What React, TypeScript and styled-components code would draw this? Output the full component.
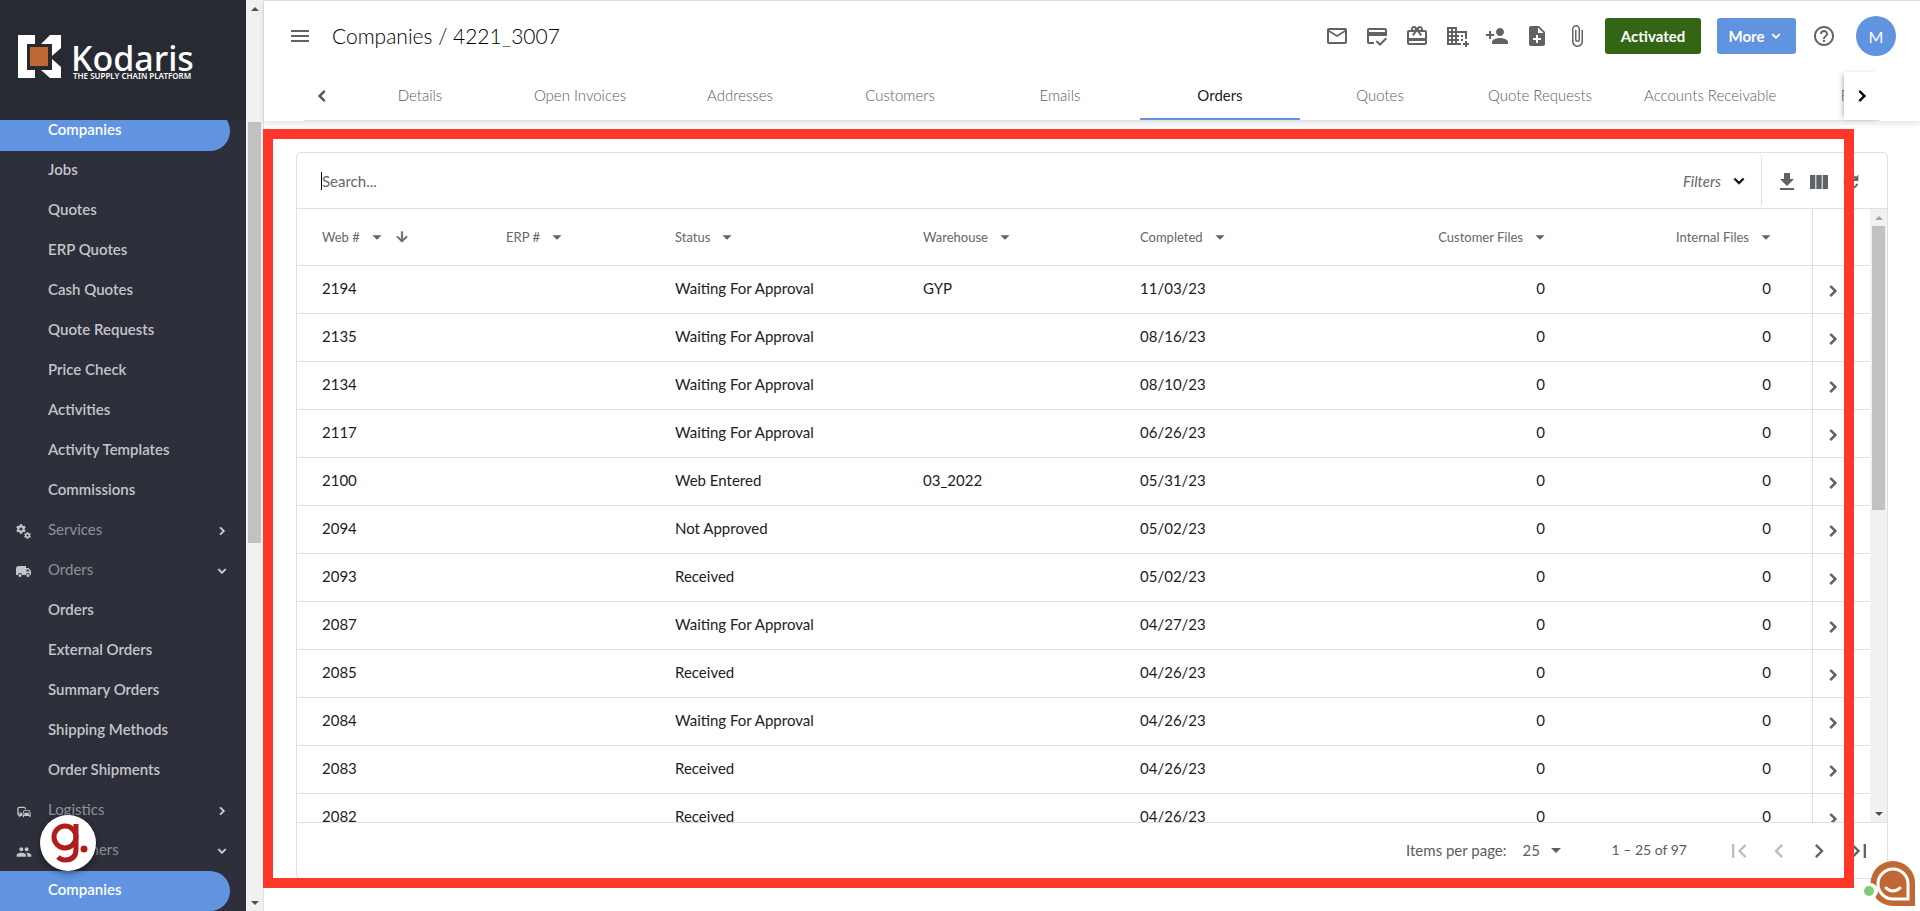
import React from "react";
import styled, { createGlobalStyle, css } from "styled-components";
import {
  MdOutlineMail, MdOutlineCreditScore, MdRedeem, MdDomainAdd, MdPersonAdd, MdNoteAdd, MdAttachFile,
  MdHelpOutline, MdMenu, MdChevronLeft, MdChevronRight, MdKeyboardArrowDown, MdFileDownload, MdViewColumn,
  MdRefresh, MdArrowDropDown, MdArrowDownward, MdFirstPage, MdLastPage, MdPeople, MdOutlineCommute,
} from "react-icons/md";
import { FaCog } from "react-icons/fa";

const Global = createGlobalStyle`
  *, *::before, *::after { box-sizing: border-box; }
  body { margin: 0; font-family: Lato, "Open Sans", sans-serif; font-size: 15px; color: #1c1c26; background: #fff; }
  button, input, select { font: inherit; color: inherit; }
  button { border: 0; padding: 0; background: none; cursor: pointer; }
`;

const LINE = "#e0e0e0";
const BLUE = "#6094e0";
const GREY = "#5f6368";

const heavy = css`
  path:not([fill="none"]) { stroke: currentColor; stroke-width: 1; }
`;
const HeavyLeft = styled(MdChevronLeft)`${heavy}`;
const HeavyRight = styled(MdChevronRight)`${heavy}`;
const HeavyDown = styled(MdKeyboardArrowDown)`${heavy}`;
const HeavySort = styled(MdArrowDownward)`${heavy}`;

const Shell = styled.div`
  display: flex;
  height: 100vh;
  overflow: hidden;
  position: relative;
`;

const Sidebar = styled.aside`
  width: 246px;
  flex: none;
  display: flex;
  flex-direction: column;
  background: #2d2f3b;
`;

const Brand = styled.a`
  height: 120px;
  flex: none;
  display: flex;
  align-items: flex-start;
  gap: 9px;
  padding: 35px 18px 0;
  background: #272a33;
  color: #fff;
  text-decoration: none;
`;

const BrandText = styled.span`
  display: flex;
  flex-direction: column;
  padding-top: 9px;
  font-family: "Noto Sans", "Open Sans", sans-serif;
`;

const BrandName = styled.span`
  font-size: 34px;
  font-weight: 500;
  line-height: 28px;
`;

const BrandTag = styled.span`
  padding-left: 2px;
  font-size: 8px;
  font-weight: 600;
  line-height: 8px;
  white-space: nowrap;
`;

const NavClip = styled.nav`
  flex: 1;
  min-height: 0;
  overflow: hidden;
`;

const NavList = styled.ul`
  list-style: none;
  margin: -9px 0 0;
  padding: 0;
`;

const NavLink = styled.a<{ $kind: "item" | "group" | "active" }>`
  height: 40px;
  width: 230px;
  display: flex;
  align-items: center;
  padding: 0 0 4px 16px;
  text-decoration: none;
  color: #c4c5c9;
  font-weight: 600;
  ${(p) => p.$kind === "group" && css`color: #8f9096; font-weight: 400;`}
  ${(p) => p.$kind === "active" && css`color: #fff; background: ${BLUE}; border-radius: 0 20px 20px 0;`}
`;

const NavIcon = styled.span`
  width: 32px;
  display: flex;
  color: #c4c5c9;
  padding-top: 5px;
`;

const NavArrow = styled.span`
  margin-left: auto;
  display: flex;
  color: #d0d0d4;
  padding-top: 4px;
`;

const Track = styled.div`
  width: 17px;
  flex: none;
  display: flex;
  flex-direction: column;
  align-items: center;
  background: #f1f1f1;
`;

const TrackArrow = styled.span<{ $down?: boolean; $dim?: boolean }>`
  height: 17px;
  display: flex;
  align-items: center;
  &::before {
    content: "";
    border: 4px solid transparent;
    border-top-width: ${(p) => (p.$down ? "4px" : "0")};
    border-bottom-width: ${(p) => (p.$down ? "0" : "4px")};
    border-${(p) => (p.$down ? "top" : "bottom")}-color: ${(p) => (p.$dim ? "#a3a3a3" : "#505050")};
  }
`;

const TrackRun = styled.div`
  flex: 1;
  width: 13px;
  display: flex;
  flex-direction: column;
`;

const Thumb = styled.div<{ $before: number; $size: number }>`
  margin-top: auto;
  flex: none;
  height: ${(p) => p.$size}%;
  background: #c1c1c1;
  & + div { height: ${(p) => 100 - p.$before - p.$size}%; }
`;

const Main = styled.main`
  flex: 1;
  min-width: 0;
  display: flex;
  flex-direction: column;
  border-left: 1px solid ${LINE};
  border-top: 1px solid ${LINE};
`;

const Header = styled.header`
  flex: none;
  box-shadow: 0 3px 6px rgba(0, 0, 0, 0.1);
`;

const TitleBar = styled.div`
  height: 71px;
  display: flex;
  align-items: center;
  padding: 0 24px 1px;
`;

const Title = styled.h1`
  margin: 0 auto 0 20px;
  font-size: 21px;
  font-weight: 300;
  line-height: 28px;
  color: #000;
`;

const IconButton = styled.button<{ $w?: number; $color?: string }>`
  width: ${(p) => p.$w ?? 40}px;
  height: 32px;
  flex: none;
  display: flex;
  align-items: center;
  justify-content: center;
  color: ${(p) => p.$color ?? GREY};
`;

const HeaderIcons = styled.div`
  display: flex;
  margin-right: 8px;
`;

const Action = styled.button<{ $bg: string; $w: number }>`
  width: ${(p) => p.$w}px;
  height: 36px;
  margin-right: 16px;
  display: flex;
  align-items: center;
  justify-content: center;
  gap: 4px;
  border-radius: 3px;
  background: ${(p) => p.$bg};
  color: #fff;
  font-weight: 700;
`;

const Avatar = styled.button`
  width: 40px;
  height: 40px;
  margin-left: 20px;
  border-radius: 50%;
  background: ${BLUE};
  color: #fff;
  font-size: 16px;
`;

const TabBar = styled.div`
  height: 49px;
  margin: 0 40px;
  display: flex;
  border-bottom: 1px solid ${LINE};
`;

const TabPager = styled.button<{ $next?: boolean }>`
  width: 36px;
  flex: none;
  display: flex;
  align-items: center;
  justify-content: center;
  color: ${(p) => (p.$next ? "#111" : "#5a5a5f")};
`;

const Tabs = styled.div`
  flex: 1;
  min-width: 0;
  display: flex;
  overflow: hidden;
`;

const Tab = styled.button<{ $on: boolean }>`
  min-width: 160px;
  padding: 0 24px;
  flex: none;
  white-space: nowrap;
  font-weight: ${(p) => (p.$on ? 400 : 300)};
  color: ${(p) => (p.$on ? "#222" : "#5c5c62")};
  border-bottom: 2px solid ${(p) => (p.$on ? BLUE : "transparent")};
`;

const TabEdge = styled.div`
  display: flex;
  position: relative;
  background: #fff;
  box-shadow: -3px 0 5px -2px rgba(0, 0, 0, 0.3);
`;

const Card = styled.section`
  flex: 1;
  min-height: 0;
  margin: 31px 32px 32px;
  display: flex;
  flex-direction: column;
  border: 1px solid ${LINE};
  border-radius: 5px;
`;

const SearchRow = styled.div`
  height: 56px;
  flex: none;
  display: flex;
  border-bottom: 1px solid ${LINE};
`;

const SearchBox = styled.div`
  flex: 1;
  display: flex;
  align-items: center;
  padding: 0 12px 0 24px;
  border-right: 1px solid ${LINE};
  border-radius: 0 5px 5px 0;
`;

const Caret = styled.span`
  width: 1px;
  height: 18px;
  background: #000;
`;

const SearchInput = styled.input`
  flex: 1;
  min-width: 0;
  border: 0;
  padding: 0;
  outline: 0;
  background: none;
  &::placeholder { color: #66666c; opacity: 1; }
`;

const FilterButton = styled.button`
  display: flex;
  align-items: center;
  gap: 8px;
  color: #66666c;
  font-style: italic;
  svg { color: #111; }
`;

const Tools = styled.div`
  display: flex;
  align-items: center;
  padding: 2px 20px 0 9px;
`;

const Body = styled.div`
  flex: 1;
  min-height: 0;
  display: flex;
`;

const TableClip = styled.div`
  flex: 1;
  min-width: 0;
  overflow: hidden;
`;

const Table = styled.table`
  width: 100%;
  table-layout: fixed;
  border-collapse: separate;
  border-spacing: 0;
`;

const HeadCell = styled.th`
  height: 57px;
  padding: 0 35px 0 9px;
  border-bottom: 1px solid ${LINE};
  font-weight: 400;
  font-size: 13px;
  color: #66666c;
  text-align: left;
  &:first-child { padding-left: 25px; }
  &:last-child { border-left: 1px solid ${LINE}; padding: 0; }
`;

const HeadInner = styled.span<{ $right?: boolean }>`
  display: flex;
  align-items: center;
  justify-content: ${(p) => (p.$right ? "flex-end" : "flex-start")};
  gap: 6px;
  white-space: nowrap;
  svg { color: ${GREY}; flex: none; }
`;

const Cell = styled.td<{ $right?: boolean }>`
  height: 48px;
  padding: 0 41px 4px 9px;
  border-bottom: 1px solid ${LINE};
  text-align: ${(p) => (p.$right ? "right" : "left")};
  white-space: nowrap;
  &:first-child { padding-left: 25px; }
  &:last-child { border-left: 1px solid ${LINE}; padding: 2px 0 0; }
`;

const Footer = styled.div`
  height: 56px;
  flex: none;
  display: flex;
  align-items: center;
  justify-content: flex-end;
  padding-right: 8px;
  border-top: 1px solid ${LINE};
  color: #5c5c62;
`;

const PageSize = styled.label`
  display: flex;
  align-items: center;
  gap: 16px;
  padding-bottom: 2px;
`;

const SelectWrap = styled.span`
  display: flex;
  align-items: center;
`;

const Select = styled.select`
  appearance: none;
  border: 0;
  padding: 0;
  width: 21px;
  background: none;
`;

const Range = styled.span`
  margin: 0 32px 0 44px;
  padding-bottom: 2px;
  font-size: 14px;
`;

const Highlight = styled.div`
  position: absolute;
  top: 129px;
  right: 66px;
  bottom: 23px;
  left: 263px;
  border: 10px solid #ff372b;
  pointer-events: none;
`;

const GuideBubble = styled.button`
  position: absolute;
  left: 40px;
  bottom: 40px;
  width: 56px;
  height: 56px;
  border-radius: 50%;
  background: #fff;
  box-shadow: 0 2px 6px rgba(0, 0, 0, 0.5);
`;

const ChatBubble = styled.button`
  position: absolute;
  right: 4px;
  bottom: 4px;
  width: 53px;
  height: 48px;
`;

const GearsIcon = () => (
  <svg width="15" height="15" viewBox="0 0 15 15" fill="currentColor">
    <FaCog x="0" y="0" size={10} />
    <FaCog x="8" y="8" size={7} />
  </svg>
);

const VanIcon = () => (
  <svg width="16" height="12" viewBox="0 0 16 12" fill="currentColor">
    <path d="M3 0h7v2h2.500L15 5v4h-1a2 2 0 0 0-4 0H6a2 2 0 0 0-4 0H0V3a3 3 0 0 1 3-3zm7.500 3.500v2h3L12 3.500z" fillRule="evenodd" />
    <circle cx="4" cy="9.500" r="1.500" />
    <circle cx="12" cy="9.500" r="1.500" />
  </svg>
);

const nav: [string, "item" | "group" | "active", React.ReactNode?, boolean?][] = [
  ["Companies", "active"],
  ["Jobs", "item"],
  ["Quotes", "item"],
  ["ERP Quotes", "item"],
  ["Cash Quotes", "item"],
  ["Quote Requests", "item"],
  ["Price Check", "item"],
  ["Activities", "item"],
  ["Activity Templates", "item"],
  ["Commissions", "item"],
  ["Services", "group", <GearsIcon />],
  ["Orders", "group", <VanIcon />, true],
  ["Orders", "item"],
  ["External Orders", "item"],
  ["Summary Orders", "item"],
  ["Shipping Methods", "item"],
  ["Order Shipments", "item"],
  ["Logistics", "group", <MdOutlineCommute size={16} />],
  ["Customers", "group", <MdPeople size={16} />, true],
  ["Companies", "active"],
];

const tabs = ["Details", "Open Invoices", "Addresses", "Customers", "Emails", "Orders", "Quotes", "Quote Requests", "Accounts Receivable", "File Uploads"];

const columns: { name: string; width: number; right?: boolean; sorted?: boolean }[] = [
  { name: "Web #", width: 200, sorted: true },
  { name: "ERP #", width: 169 },
  { name: "Status", width: 248 },
  { name: "Warehouse", width: 217 },
  { name: "Completed", width: 210 },
  { name: "Customer Files", width: 245, right: true },
  { name: "Internal Files", width: 226, right: true },
];

const rows = [
  ["2194", "", "Waiting For Approval", "GYP", "11/03/23"],
  ["2135", "", "Waiting For Approval", "", "08/16/23"],
  ["2134", "", "Waiting For Approval", "", "08/10/23"],
  ["2117", "", "Waiting For Approval", "", "06/26/23"],
  ["2100", "", "Web Entered", "03_2022", "05/31/23"],
  ["2094", "", "Not Approved", "", "05/02/23"],
  ["2093", "", "Received", "", "05/02/23"],
  ["2087", "", "Waiting For Approval", "", "04/27/23"],
  ["2085", "", "Received", "", "04/26/23"],
  ["2084", "", "Waiting For Approval", "", "04/26/23"],
  ["2083", "", "Received", "", "04/26/23"],
  ["2082", "", "Received", "", "04/26/23"],
];

const headerIcons: [string, React.ReactNode][] = [
  ["Email", <MdOutlineMail size={24} />],
  ["Credit", <MdOutlineCreditScore size={24} />],
  ["Rewards", <MdRedeem size={24} />],
  ["Add company", <MdDomainAdd size={24} />],
  ["Add user", <MdPersonAdd size={24} />],
  ["Add note", <MdNoteAdd size={24} />],
  ["Attach file", <MdAttachFile size={24} />],
];

function ScrollTrack({ before, size, dim }: { before: number; size: number; dim?: boolean }) {
  return (
    <Track aria-hidden>
      <TrackArrow $dim={dim} />
      <TrackRun>
        <Thumb $before={before} $size={size} />
        <div />
      </TrackRun>
      <TrackArrow $down />
    </Track>
  );
}

export default function App() {
  return (
    <>
      <Global />
      <Shell>
        <Sidebar>
          <Brand href="#" aria-label="Kodaris">
            <svg width="44" height="44" viewBox="0 0 44 44">
              <path d="M0 0h17v9H9v26h8v8H0z" fill="#fff" />
              <path d="M43 0v13l-9 8V9H23l9-9zM23 35h11V24l9 8v11H32z" fill="#fff" />
              <path d="M12 12h18v19H12z" fill="#bf6834" />
            </svg>
            <BrandText>
              <BrandName>Kodaris</BrandName>
              <BrandTag>THE SUPPLY CHAIN PLATFORM</BrandTag>
            </BrandText>
          </Brand>
          <NavClip>
            <NavList>
              {nav.map(([label, kind, icon, open], i) => (
                <li key={i}>
                  <NavLink href="#" $kind={kind}>
                    <NavIcon>{icon}</NavIcon>
                    {label}
                    {kind === "group" && (
                      <NavArrow>{open ? <HeavyDown size={16} /> : <HeavyRight size={16} />}</NavArrow>
                    )}
                  </NavLink>
                </li>
              ))}
            </NavList>
          </NavClip>
        </Sidebar>
        <ScrollTrack before={12} size={48} />
        <Main>
          <Header>
            <TitleBar>
              <IconButton $w={24} aria-label="Menu"><MdMenu size={24} /></IconButton>
              <Title>Companies / 4221_3007</Title>
              <HeaderIcons>
                {headerIcons.map(([label, icon]) => (
                  <IconButton key={label} aria-label={label}>{icon}</IconButton>
                ))}
              </HeaderIcons>
              <Action $bg="#336614" $w={96}>Activated</Action>
              <Action $bg={BLUE} $w={79}>More <HeavyDown size={16} /></Action>
              <IconButton $w={24} aria-label="Help"><MdHelpOutline size={24} /></IconButton>
              <Avatar>M</Avatar>
            </TitleBar>
            <TabBar>
              <TabPager aria-label="Previous tabs"><HeavyLeft size={22} /></TabPager>
              <Tabs role="tablist">
                {tabs.map((t) => (
                  <Tab key={t} role="tab" aria-selected={t === "Orders"} $on={t === "Orders"}>{t}</Tab>
                ))}
              </Tabs>
              <TabEdge>
                <TabPager $next aria-label="Next tabs"><HeavyRight size={22} /></TabPager>
              </TabEdge>
            </TabBar>
          </Header>
          <Card>
            <SearchRow>
              <SearchBox>
                <Caret />
                <SearchInput placeholder="Search..." aria-label="Search" />
                <FilterButton>Filters <HeavyDown size={20} /></FilterButton>
              </SearchBox>
              <Tools>
                <IconButton $w={32} aria-label="Download"><MdFileDownload size={24} /></IconButton>
                <IconButton $w={32} aria-label="Columns"><MdViewColumn size={24} /></IconButton>
                <IconButton $w={32} aria-label="Refresh"><MdRefresh size={22} /></IconButton>
              </Tools>
            </SearchRow>
            <Body>
              <TableClip>
                <Table>
                  <colgroup>
                    {columns.map((c) => <col key={c.name} width={c.width} />)}
                    <col width={58} />
                  </colgroup>
                  <thead>
                    <tr>
                      {columns.map((c) => (
                        <HeadCell key={c.name} scope="col">
                          <HeadInner $right={c.right}>
                            {c.name}
                            <MdArrowDropDown size={22} />
                            {c.sorted && <HeavySort size={16} />}
                          </HeadInner>
                        </HeadCell>
                      ))}
                      <HeadCell aria-label="Open" />
                    </tr>
                  </thead>
                  <tbody>
                    {rows.map((r) => (
                      <tr key={r[0]}>
                        {r.map((v, i) => <Cell key={i}>{v}</Cell>)}
                        <Cell $right>0</Cell>
                        <Cell $right>0</Cell>
                        <Cell>
                          <IconButton aria-label={`Open order ${r[0]}`}><HeavyRight size={22} /></IconButton>
                        </Cell>
                      </tr>
                    ))}
                  </tbody>
                </Table>
              </TableClip>
              <ScrollTrack before={0} size={49} dim />
            </Body>
            <Footer>
              <PageSize>
                Items per page:
                <SelectWrap>
                  <Select defaultValue="25"><option>25</option><option>50</option></Select>
                  <MdArrowDropDown size={24} />
                </SelectWrap>
              </PageSize>
              <Range>1 – 25 of 97</Range>
              <IconButton aria-label="First page" $color="#bdbdbd"><MdFirstPage size={28} /></IconButton>
              <IconButton aria-label="Previous page" $color="#bdbdbd"><MdChevronLeft size={28} /></IconButton>
              <IconButton aria-label="Next page"><MdChevronRight size={28} /></IconButton>
              <IconButton aria-label="Last page"><MdLastPage size={28} /></IconButton>
            </Footer>
          </Card>
        </Main>
        <Highlight />
        <GuideBubble aria-label="Guide">
          <svg width="56" height="56" viewBox="0 0 56 56" fill="none" stroke="#b01c1c" strokeWidth="5">
            <circle cx="25" cy="22" r="11" />
            <path d="M36 9v25q0 11-11 11-4 0-7-3" />
            <circle cx="44" cy="34" r="3.500" fill="#b01c1c" stroke="none" />
          </svg>
        </GuideBubble>
        <ChatBubble aria-label="Chat">
          <svg width="53" height="48" viewBox="0 0 53 48">
            <path d="M30 2a22 22 0 0 0 0 45h22V24A22 22 0 0 0 30 2z" fill="#bf6834" />
            <circle cx="7" cy="32" r="8" fill="#fff" />
            <circle cx="6" cy="32" r="5" fill="#7fcb78" />
            <path d="M30 10a15 15 0 0 0 0 30h15V25A15 15 0 0 0 30 10z" fill="#bf6834" stroke="#fff" strokeWidth="3" />
            <path d="M23 29q7 6 14 0" fill="none" stroke="#fff" strokeWidth="3" strokeLinecap="round" />
          </svg>
        </ChatBubble>
      </Shell>
    </>
  );
}
